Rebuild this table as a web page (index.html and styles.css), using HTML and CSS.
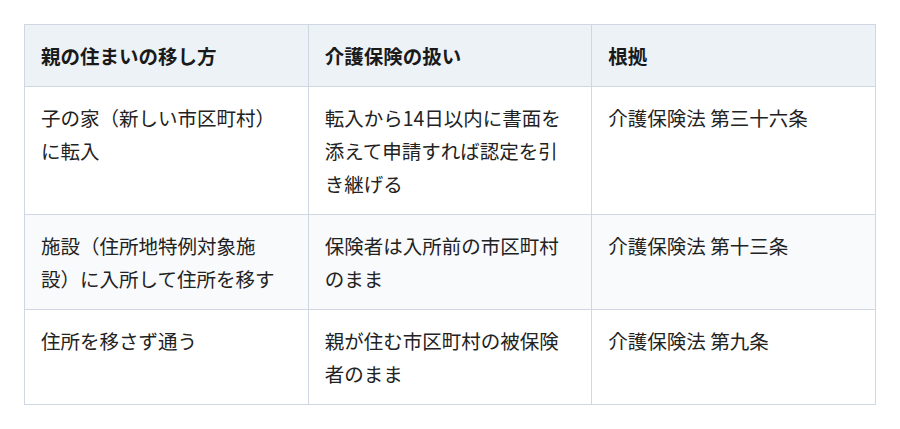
FILE: index.html
```html
<!DOCTYPE html>
<html lang="ja">
<head>
<meta charset="utf-8">
<title>親の住まいの移し方</title>
<link rel="stylesheet" href="styles.css">
</head>
<body>
<div class="wrap">
  <table class="rules">
    <thead>
      <tr>
        <th>親の住まいの移し方</th>
        <th>介護保険の扱い</th>
        <th>根拠</th>
      </tr>
    </thead>
    <tbody>
      <tr>
        <td>子の家（新しい市区町村）に転入</td>
        <td>転入から14日以内に書面を添えて申請すれば認定を引き継げる</td>
        <td>介護保険法 第三十六条</td>
      </tr>
      <tr>
        <td>施設（住所地特例対象施設）に入所して住所を移す</td>
        <td>保険者は入所前の市区町村のまま</td>
        <td>介護保険法 第十三条</td>
      </tr>
      <tr>
        <td>住所を移さず通う</td>
        <td>親が住む市区町村の被保険者のまま</td>
        <td>介護保険法 第九条</td>
      </tr>
    </tbody>
  </table>
</div>
</body>
</html>
```

FILE: styles.css
```css
html, body {
  margin: 0;
  padding: 0;
  background: #ffffff;
}

body {
  font-family: "Noto Sans CJK JP", "Noto Sans", sans-serif;
  color: #222222;
}

.wrap {
  padding: 24px;
}

.rules {
  width: 100%;
  table-layout: fixed;
  border-collapse: collapse;
  font-size: 19.5px;
  line-height: 33px;
  text-spacing-trim: space-all;
}

.rules th,
.rules td {
  border: 1px solid #cfd8e2;
  padding: 14px 16px;
  text-align: left;
  vertical-align: top;
}

.rules th {
  background: #edf2f7;
  font-weight: 700;
  color: #1a1a1a;
}

.rules td {
  font-weight: 400;
}

.rules tbody tr:nth-child(even) td {
  background: #f8fafc;
}
```
